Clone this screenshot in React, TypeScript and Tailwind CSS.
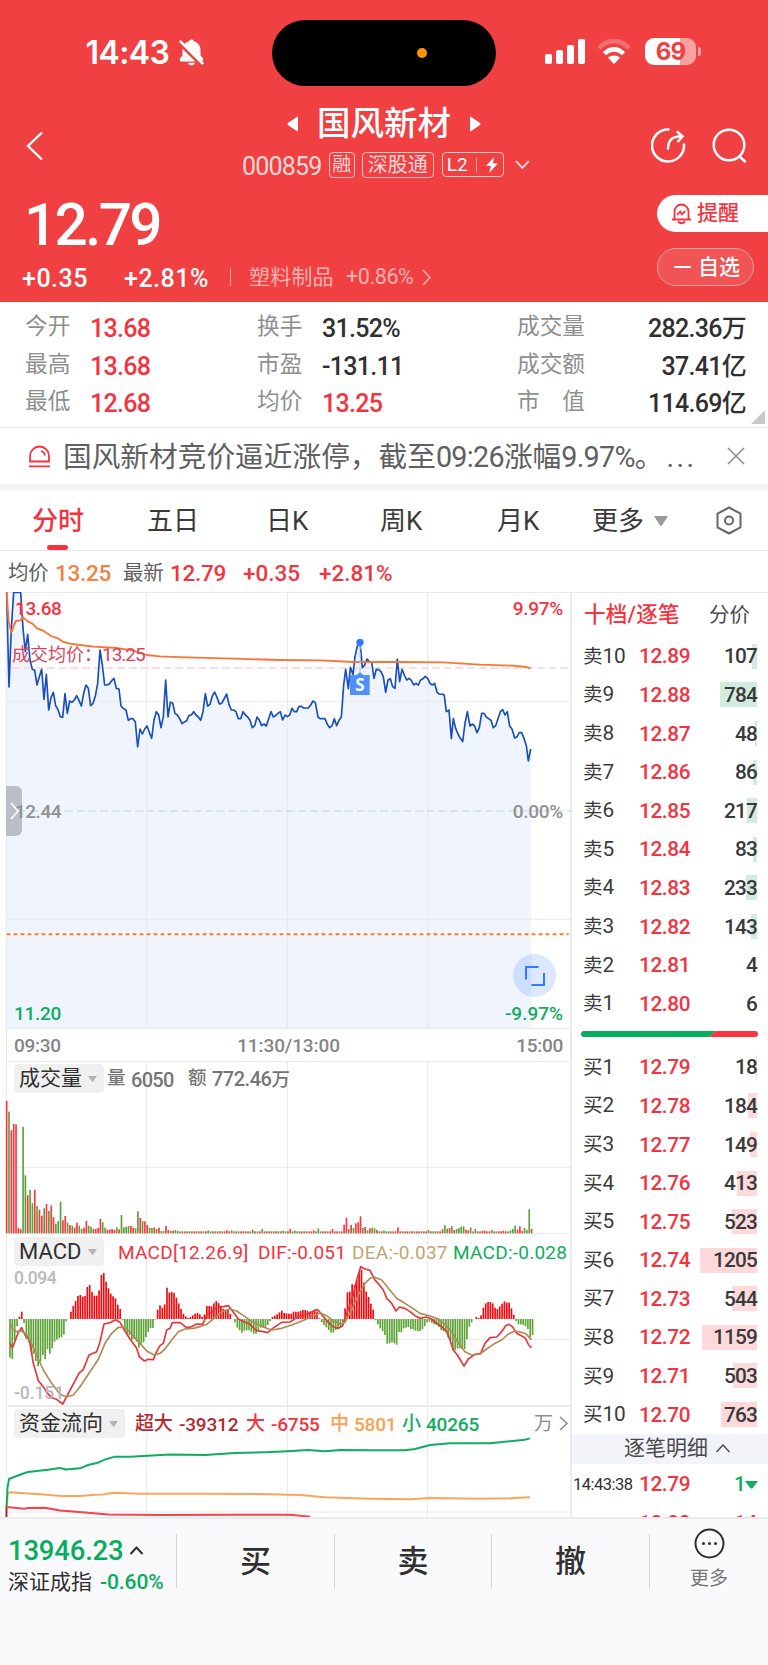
import { BiSolidBellOff } from "react-icons/bi";

const pricePoints =
    "20,22 27,306 34,130 41,22 62,22 69,130 76,200 83,148 90,225 97,253 104,255 111,300 118,275 125,253 132,343 139,268 146,375 153,338 160,322 167,362 174,374 181,395 188,397 195,326 202,385 209,348 216,352 223,345 230,332 237,346 244,363 251,325 258,300 265,310 272,362 279,355 286,333 293,295 300,195 307,240 314,300 321,300 328,297 335,287 342,280 349,310 357,312 363,363 370,370 378,375 385,406 392,401 399,401 406,411 413,486 420,432 427,447 434,432 441,423 448,442 455,460 462,405 469,380 476,390 483,428 490,395 497,285 504,396 511,352 518,354 525,385 532,390 539,401 546,416 553,411 560,407 567,391 574,390 581,380 588,390 595,396 602,406 609,380 616,326 623,363 630,358 637,333 644,321 651,337 658,357 665,355 672,342 680,327 687,358 694,375 701,375 708,380 715,401 722,401 729,380 736,390 743,396 750,406 757,428 764,422 771,396 778,406 785,422 792,417 799,423 806,401 813,380 820,396 827,391 834,385 841,380 848,405 855,390 862,395 869,390 876,370 883,380 890,380 897,364 904,364 911,369 925,369 932,360 939,348 946,353 954,396 960,401 975,401 982,418 989,428 996,422 1003,401 1010,422 1017,406 1024,396 1031,300 1037,253 1045,311 1051,247 1059,268 1065,215 1072,183 1080,172 1087,248 1094,240 1101,222 1108,230 1115,231 1122,280 1129,253 1136,254 1143,260 1150,275 1157,322 1164,285 1171,281 1178,305 1185,310 1192,222 1199,290 1206,253 1213,270 1220,285 1227,280 1234,286 1241,300 1248,295 1255,300 1262,285 1269,281 1276,274 1283,280 1290,295 1297,300 1304,295 1311,322 1318,327 1330,328 1333,332 1339,380 1347,375 1354,460 1360,401 1367,430 1374,447 1381,460 1388,470 1395,415 1402,380 1410,423 1417,417 1424,423 1431,443 1438,428 1445,385 1452,385 1459,396 1473,406 1480,428 1487,422 1494,401 1501,380 1508,374 1515,390 1522,380 1529,423 1536,432 1544,459 1551,455 1558,443 1565,443 1572,460 1579,482 1585,528 1592,492";

const avgPoints =
    "20,22 26,110 34,142 47,108 62,106 69,97 83,109 97,116 111,130 128,136 153,153 174,160 188,170 209,176 240,180 280,185 350,189 400,197 440,210 480,214 560,217 700,221 840,225 960,226 1060,231 1200,231 1330,232 1390,236 1440,239 1540,242 1580,246 1592,250";

const difPoints =
    "30,325 37,338 44,322 55,292 65,278 75,300 88,315 100,385 115,437 130,455 140,472 155,488 170,493 188,507 200,485 212,462 237,415 250,403 267,360 290,350 300,320 312,267 330,263 347,254 360,262 373,285 390,312 410,340 418,365 433,378 445,373 460,374 470,350 480,332 490,325 500,285 510,280 517,263 540,263 560,278 575,275 590,267 608,268 620,240 635,232 650,216 670,215 685,212 700,232 715,252 735,262 750,268 770,287 790,290 803,293 818,280 845,262 870,261 890,248 910,240 930,233 948,224 955,226 970,245 985,262 1000,276 1015,280 1028,272 1040,235 1060,180 1070,135 1082,95 1095,102 1110,106 1125,135 1140,152 1150,165 1160,190 1175,205 1188,228 1198,216 1215,220 1230,230 1245,242 1260,250 1280,246 1295,252 1310,265 1325,275 1340,290 1350,315 1360,345 1372,360 1392,393 1405,372 1425,358 1442,355 1455,325 1470,308 1490,306 1505,290 1517,272 1527,268 1537,275 1550,295 1575,308 1586,330 1595,338";

const deaPoints =
    "30,265 38,282 50,290 65,288 75,295 90,315 105,350 130,405 155,445 180,478 200,486 220,480 240,455 270,410 295,373 315,325 335,295 355,277 370,277 385,287 400,303 420,325 440,348 462,360 480,355 495,342 515,315 535,290 555,282 580,280 600,275 620,268 640,252 660,235 675,226 690,222 710,228 735,245 765,265 800,280 815,285 845,280 875,270 900,260 925,250 945,240 960,234 980,242 1000,258 1022,268 1035,262 1055,225 1075,180 1095,145 1110,130 1122,126 1145,135 1165,160 1190,190 1210,202 1235,218 1260,235 1290,243 1315,252 1335,268 1355,290 1375,325 1395,350 1415,360 1440,357 1460,342 1480,328 1505,315 1525,297 1545,288 1565,292 1580,298 1594,314";

// y of the end of every MACD bar, one per minute, the zero line is at 252
const macdBars = [
    368, 372, 315, 273, 246, 230, 264, 312, 320, 345, 357, 378, 394, 380, 360, 372, 342, 356, 340, 320, 314, 309, 306, 298, 259, 252,
    230, 213, 198, 183, 180, 185, 183, 156, 150, 171, 182, 182, 166, 120, 114, 140, 160, 176, 184, 190, 209, 222, 256, 283, 295, 300,
    314, 312, 320, 338, 326, 322, 306, 291, 279, 279, 254, 225, 211, 218, 208, 158, 173, 171, 174, 188, 205, 222, 237, 244, 249, 246,
    241, 236, 234, 238, 246, 238, 213, 213, 214, 205, 198, 204, 212, 222, 226, 225, 237, 252, 262, 278, 286, 293, 287, 286, 285, 290,
    296, 296, 287, 278, 278, 278, 270, 258, 246, 242, 238, 232, 227, 234, 235, 236, 236, 230, 230, 230, 228, 225, 225, 228, 230, 230,
    228, 230, 250, 262, 270, 277, 285, 293, 293, 285, 280, 275, 262, 220, 172, 170, 148, 150, 135, 112, 104, 143, 170, 186, 206, 224,
    256, 268, 280, 288, 300, 326, 325, 321, 325, 329, 291, 292, 280, 278, 276, 282, 283, 287, 288, 288, 283, 273, 262, 260, 264, 268,
    270, 276, 285, 288, 290, 308, 315, 346, 345, 340, 340, 342, 342, 312, 275, 262, 252, 246, 249, 241, 218, 205, 201, 201, 205, 218,
    222, 214, 206, 199, 203, 203, 220, 239, 258, 268, 268, 270, 274, 282, 306, 300,
];

// opening hour of the volume chart, minute by minute
const openVolume =
    "r138 g170 r226 r207 r208 r519 r523 g216 g361 r421 g405 g445 r405 g453 r464 r482 g460 r447 g468 r452 r486 g506 g498 g440 r496 r483 g503 r510 g512 r518 r503 g512 g522 r518 r498 g512 g515 r522 r522 r519 r492 g502 g518 r524 r524 r522 r525 g517 r523 g480 g517 g515 g513 r513 r518 g519 g469 r489 g498 r499 r510 g518 g519 r517 g522 r518 g528 g528 r513 r525 g527 r527 g525 g527".split(" ");

const laterVolume: Record<number, string> = {
    86: "g526", 94: "r526", 96: "g526", 105: "g524", 109: "g522", 118: "g527", 121: "r522", 123: "g527", 131: "r526", 133: "g520",
    139: "r522", 144: "r509", 145: "r488", 146: "g522", 147: "r510", 148: "g519", 149: "r505", 150: "r502", 151: "r484", 152: "g519",
    153: "r516", 154: "g526", 155: "r520", 156: "g518", 157: "g520", 158: "r525", 161: "g526", 167: "r517", 180: "g525", 186: "r523",
    187: "g511", 188: "g521", 189: "r519", 190: "g513", 191: "r525", 192: "g522", 193: "g519", 194: "g515", 195: "g514", 196: "r524",
    197: "r526", 198: "g517", 200: "g522", 203: "r527", 204: "r527", 207: "g525", 212: "r527", 215: "g526", 216: "g522", 217: "g512",
    218: "r524", 219: "r514", 220: "r528", 221: "g519", 222: "g525", 223: "g463", 224: "r522",
};

const volumeBars = Array.from({ length: 225 }, (_, i) => openVolume[i] ?? laterVolume[i] ?? (i * 7 % 5 < 3 ? "r529" : "g529"));

const sells = [
    { name: "卖10", price: "12.89", qty: 107, bar: 5 },
    { name: "卖9", price: "12.88", qty: 784, bar: 37 },
    { name: "卖8", price: "12.87", qty: 48, bar: 2 },
    { name: "卖7", price: "12.86", qty: 86, bar: 4 },
    { name: "卖6", price: "12.85", qty: 217, bar: 10 },
    { name: "卖5", price: "12.84", qty: 83, bar: 4 },
    { name: "卖4", price: "12.83", qty: 233, bar: 11 },
    { name: "卖3", price: "12.82", qty: 143, bar: 6 },
    { name: "卖2", price: "12.81", qty: 4, bar: 0 },
    { name: "卖1", price: "12.80", qty: 6, bar: 0 },
];

const buys = [
    { name: "买1", price: "12.79", qty: 18, bar: 1 },
    { name: "买2", price: "12.78", qty: 184, bar: 9 },
    { name: "买3", price: "12.77", qty: 149, bar: 7 },
    { name: "买4", price: "12.76", qty: 413, bar: 20 },
    { name: "买5", price: "12.75", qty: 523, bar: 25 },
    { name: "买6", price: "12.74", qty: 1205, bar: 57 },
    { name: "买7", price: "12.73", qty: 544, bar: 25 },
    { name: "买8", price: "12.72", qty: 1159, bar: 55 },
    { name: "买9", price: "12.71", qty: 503, bar: 24 },
    { name: "买10", price: "12.70", qty: 763, bar: 36 },
];

const stats = [
    [["今开", "13.68", true], ["换手", "31.52%", false], ["成交量", "282.36万", false]],
    [["最高", "13.68", true], ["市盈", "-131.11", false], ["成交额", "37.41亿", false]],
    [["最低", "12.68", true], ["均价", "13.25", true], ["市　值", "114.69亿", false]],
] as [string, string, boolean][][];

const StatusBar = () => (
    <div className="flex h-[87px] items-start text-white">
        <div className="ml-[85.5px] mt-[35px] w-[90px] font-['Inter'] text-[32px] leading-[35px] font-semibold tracking-[-0.6px]">14:43</div>
        <BiSolidBellOff className="mt-[36px] h-[33px] w-[31px]" />
        <div className="ml-[65.5px] mt-5 flex h-[66px] w-[224px] items-center rounded-full bg-black">
            <div className="ml-[145px] h-[10px] w-[10px] rounded-full bg-[#ff9500]" />
        </div>
        <div className="ml-[49px] mt-[39px] flex h-[25px] items-end gap-[4px]">
            <div className="h-[10px] w-[7px] rounded-[2px] bg-white" />
            <div className="h-[14px] w-[7px] rounded-[2px] bg-white" />
            <div className="h-[19px] w-[7px] rounded-[2px] bg-white" />
            <div className="h-[25px] w-[7px] rounded-[2px] bg-white" />
        </div>
        <svg className="ml-[12px] mt-[39px]" width="34" height="25" viewBox="0 0 34 25" fill="none">
            <path d="M2 9.5C10.300 -.6 23.700 -.6 32 9.500" stroke="#f56f70" strokeWidth="4.600" />
            <path d="M7.500 14.800C13 8.900 21 8.900 26.500 14.800" stroke="#fff" strokeWidth="4.600" />
            <path d="M17 25l-6-6.200c3.500-3 8.500-3 12 0z" fill="#fff" />
        </svg>
        <div className="ml-[14px] mt-[38px] flex h-[27px] items-center">
            <div className="flex h-[27px] w-[51px] items-center justify-center rounded-[9px] bg-[linear-gradient(90deg,#fff_69%,#f9a0a0_69%)] font-['Inter'] text-[24px] leading-none font-bold tracking-[-0.8px] text-[#ef4042]">69</div>
            <div className="ml-[2px] h-[9px] w-[3px] rounded-r-full bg-[#f9a0a0]" />
        </div>
    </div>
);

const Header = () => (
    <header className="flex h-[302px] flex-col bg-[#f04042] text-white">
        <StatusBar />
        <div className="flex h-[100px]">
            <svg className="ml-[25px] mt-[44px]" width="20" height="30" viewBox="0 0 20 30" fill="none" stroke="#fff" strokeWidth="2.400">
                <path d="M17 1.500L3 15l14 13.500" />
            </svg>
            <div className="ml-[197px] flex w-[288px] flex-col">
                <div className="mt-[18px] flex h-[38px] items-center pl-[45px]">
                    <svg width="12" height="16" viewBox="0 0 12 16" fill="#fff"><path d="M11 1.500v13q0 1.500-1.300.6L1 9Q0 8 1 7L9.700.9Q11 0 11 1.500z" /></svg>
                    <div className="ml-[18px] w-[152px] text-[33.500px] leading-none font-medium">国风新材</div>
                    <svg width="12" height="16" viewBox="0 0 12 16" fill="#fff"><path d="M1 1.500v13q0 1.500 1.300.6L11 9q1-1 0-2L2.300.9Q1 0 1 1.500z" /></svg>
                </div>
                <div className="mt-[8px] flex h-[27px] items-center text-[20px] leading-none text-[#ffd9d9]">
                    <span className="w-[88px] pt-[3px] text-[25px] tracking-[-0.8px]">000859</span>
                    <span className="flex h-[26px] w-[26px] items-center justify-center rounded-[4px] border border-[#ffc4c4] text-[19px]">融</span>
                    <span className="ml-[7px] flex h-[26px] w-[73px] items-center justify-center rounded-[4px] border border-[#ffc4c4] text-[20px]">深股通</span>
                    <span className="ml-[8px] flex h-[25px] w-[63px] items-center rounded-[4px] border border-[#ffc4c4] pl-[4px] text-[19px] text-white">
                        L2
                        <span className="ml-[8px] h-[14px] w-px bg-[#f9a0a0]" />
                        <svg className="ml-[8px]" width="14" height="16" viewBox="0 0 14 16" fill="#fff"><path d="M9 0L1 9h5l-2 7 9-9.500H8z" /></svg>
                    </span>
                    <svg className="ml-[11px]" width="15" height="10" viewBox="0 0 15 10" fill="none" stroke="#ffd9d9" strokeWidth="1.800"><path d="M1 1l6.500 7L14 1" /></svg>
                </div>
            </div>
            <svg className="ml-[121px] mt-[40px]" width="36" height="37" viewBox="0 0 36 37" fill="none" stroke="#fff" strokeWidth="2.500" strokeLinecap="round">
                <path d="M17.500 2.500a16 16 0 1 0 15.500 15" />
                <path d="M17 21.500c.3-8.500 4-12 13.500-12.300M26.500 5l5 4.300-4.300 5" />
            </svg>
            <svg className="ml-[25px] mt-[41px]" width="36" height="36" viewBox="0 0 36 36" fill="none" stroke="#fff" strokeWidth="2.500" strokeLinecap="round">
                <circle cx="17" cy="17" r="15.300" />
                <path d="M28 29l5 4.500" />
            </svg>
        </div>
        <div className="flex h-[115px] justify-between">
            <div className="flex flex-col">
                <div className="mt-[10px] ml-[24px] h-[56px] text-[58.500px] leading-[56px] font-medium tracking-[-2.700px]">12.79</div>
                <div className="mt-[10px] flex h-[28px] items-center text-[25px] leading-none font-medium tracking-[0.500px]">
                    <span className="ml-[22px] w-[102px] pt-[2px]">+0.35</span>
                    <span className="w-[106px] pt-[2px]">+2.81%</span>
                    <span className="h-[18px] w-px bg-[#f9a0a0]" />
                    <span className="ml-[18px] w-[97px] text-[21px] font-normal tracking-[0.200px] text-[#fcb0b0]">塑料制品</span>
                    <span className="w-[76px] text-[21.500px] font-normal tracking-[-0.400px] text-[#fcb0b0]">+0.86%</span>
                    <svg width="10" height="17" viewBox="0 0 10 17" fill="none" stroke="#fcb0b0" strokeWidth="1.600"><path d="M1 1l7 7.500L1 16" /></svg>
                </div>
            </div>
            <div className="mt-[8px] flex flex-col">
                <div className="flex h-[37px] w-[111px] items-center rounded-l-full bg-white text-[21px] leading-none font-medium text-[#f5333f]">
                    <svg className="ml-[14px] mr-[5px]" width="21" height="22" viewBox="0 0 21 22" fill="none" stroke="#f5333f" strokeWidth="1.800">
                        <path d="M1 16.500h19M3.500 16V8.500a7 7 0 0 1 14 0V16M7 18.500q3.500 3.500 7 0M6 12l3.200-3.500 1.800 2.800 3.300-3.300" />
                    </svg>
                    提醒
                </div>
                <div className="mt-[16px] flex h-[38px] w-[97px] items-center rounded-full border border-[#f9a0a0] bg-[#f15455] text-[21px] leading-none font-medium">
                    <span className="mr-[7px] ml-[16px] h-[2px] w-[17px] bg-white" />
                    自选
                </div>
            </div>
        </div>
    </header>
);

const Stats = () => (
    <section className="relative flex h-[126px] flex-col border-b border-[#e9e9ec] pt-[7px] text-[25px] leading-none font-medium tracking-[-0.700px] text-[#303030]">
        {stats.map((row, i) => (
            <div key={i} className="flex h-[37.500px] items-center">
                {row.map(([label, value, up], j) => (
                    <div key={label} className={["ml-[25px] flex w-[232px] items-center", "flex w-[260px] items-center", "flex w-[229px] items-center justify-between"][j]}>
                        <span className={`${j < 2 ? "w-[65px]" : ""} text-[22.700px] font-normal tracking-normal text-[#8f8f8f]`}>{label}</span>
                        <span className={`pt-[2px] ${up ? "text-[#f5333f]" : ""}`}>{value}</span>
                    </div>
                ))}
            </div>
        ))}
        <svg className="absolute right-[3px] bottom-[3px]" width="14" height="14" viewBox="0 0 14 14" fill="#c9c9c9"><path d="M14 0v14H0z" /></svg>
    </section>
);

const News = () => (
    <section className="flex h-[56px] items-center text-[#606060]">
        <svg className="ml-[28px]" width="23" height="23" viewBox="0 0 23 23" fill="none" stroke="#f5333f" strokeWidth="1.800">
            <path d="M2 16.500V11a9.500 9.500 0 0 1 19 0v5.500zM1 21.300h21M13 6q3.500 1 4 4.500" />
        </svg>
        <div className="ml-[12px] w-[655px] pt-[3px] text-[28.700px] leading-none whitespace-nowrap">
            国风新材竞价逼近涨停，截至<span className="tracking-[-0.700px]">09:26</span>涨幅<span className="tracking-[-0.700px]">9.97%</span>。<span className="ml-[3px] tracking-[2.500px]">...</span>
        </div>
        <svg className="ml-[9px]" width="18" height="18" viewBox="0 0 18 18" stroke="#8a8a8a" strokeWidth="1.500"><path d="M1 1l16 16M17 1L1 17" /></svg>
    </section>
);

const Tabs = () => (
    <nav className="flex h-[60px] items-center border-b border-[#e6e6e8] text-[26px] leading-none text-[#3a3a3a]">
        <div className="relative ml-[32px] flex h-full w-[115px] items-center pt-[1px] font-medium text-[#f5333f]">
            分时
            <div className="absolute bottom-0 left-[15px] h-[5px] w-[21px] rounded-full bg-[#f5333f]" />
        </div>
        <div className="w-[119px] pt-[1px]">五日</div>
        <div className="w-[114px] pt-[1px]">日K</div>
        <div className="w-[117px] pt-[1px]">周K</div>
        <div className="w-[95px] pt-[1px]">月K</div>
        <div className="w-[62px] pt-[1px]">更多</div>
        <svg width="14" height="10" viewBox="0 0 14 10" fill="#999"><path d="M1 0h12q1 0 .5 1L7.800 9.500q-.8 1-1.600 0L.5 1Q0 0 1 0z" /></svg>
        <svg className="ml-[47px]" width="28" height="29" viewBox="0 0 28 29" fill="none" stroke="#666" strokeWidth="2" strokeLinejoin="round">
            <path d="M14 1.500l11.500 6.200v13.600L14 27.500 2.500 21.300V7.700z" />
            <circle cx="14" cy="14.500" r="4" />
        </svg>
    </nav>
);

const Summary = () => (
    <div className="flex h-[41px] items-center pt-[3px] text-[22.500px] leading-none font-medium tracking-[-0.300px] text-[#f5333f]">
        <span className="ml-[8px] w-[47px] text-[20.500px] font-normal text-[#606060]">均价</span>
        <span className="w-[68px] text-[#ee8144]">13.25</span>
        <span className="w-[47px] text-[20.500px] font-normal text-[#606060]">最新</span>
        <span className="w-[73px]">12.79</span>
        <span className="w-[76px] tracking-normal">+0.35</span>
        <span className="tracking-normal">+2.81%</span>
    </div>
);

// shared frame of the charts: left and right edge and the three time lines
const Grid = ({ top, bottom, mid }: { top: number; bottom: number; mid: number[] }) => (
    <g stroke="#e8e8e8" strokeWidth="3">
        {[19, 440, 862, 1283].map((x) => <path key={x} d={`M${x} ${top}V${bottom}`} />)}
        <path d={`M1713 ${top}V${bottom}`} strokeWidth="5" />
        {mid.map((y) => <path key={y} d={`M19 ${y}H1713`} />)}
    </g>
);

const Chip = ({ children }: any) => (
    <div className="ml-[14px] flex h-[29px] shrink-0 items-center rounded-[4px] bg-[#f0f0f0] pr-[7px] pl-[5px] text-[21px] leading-none text-[#303030]">
        {children}
        <svg className="ml-[5px]" width="9" height="6" viewBox="0 0 9 6" fill="#b5b5b5"><path d="M0 0h9L5.200 5.500q-.7.700-1.400 0z" /></svg>
    </div>
);

const PriceChart = () => (
    <div className="relative h-[437px] text-[19px] leading-none font-medium">
        <svg className="absolute inset-0" width="572" height="437" viewBox="0 21 1716 1311" fill="none">
            <polygon points={`20,1330 ${pricePoints} 1594,492 1594,1330`} fill="#eff4fe" />
            <Grid top={21} bottom={1332} mid={[22, 349, 1003, 1330]} />
            <path d="M36 249H1713" stroke="#f9d5d9" strokeWidth="4" strokeDasharray="24 11" />
            <path d="M20 678H1713" stroke="#d0dfe9" strokeWidth="4" strokeDasharray="24 11" />
            <path d="M20 1048H1706" stroke="#ff7a1a" strokeWidth="6" strokeDasharray="11 10" />
            <polyline points={pricePoints} stroke="#184fbb" strokeWidth="5" strokeLinejoin="round" />
            <polyline points={avgPoints} stroke="#fb7435" strokeWidth="5.500" strokeLinejoin="round" />
            <path d="M1080 180v86" stroke="#a9c6fb" strokeWidth="4" strokeDasharray="14 8" />
            <circle cx="1080" cy="172" r="11" fill="#2e7cff" />
            <path d="M1050 270h20l10-9 10 9h19v60h-59z" fill="#4f90fd" />
        </svg>
        <div className="absolute top-[84px] left-[350px] w-[20px] text-center font-['Noto_Sans'] text-[17px] leading-[18px] font-bold text-white">S</div>
        <div className="absolute top-[7px] left-[15px] tracking-[-0.400px] text-[#f5333f]">13.68</div>
        <div className="absolute top-[7px] right-[9px] tracking-[-0.300px] text-[#f5333f]">9.97%</div>
        <div className="absolute top-[52px] left-[12px] flex h-[21px] items-center text-[18px] font-normal text-[#d9455a]">
            <span className="w-[90px] whitespace-nowrap">成交均价：</span>
            <span className="text-[19px] tracking-[-1px]">13.25</span>
        </div>
        <div className="absolute top-[194px] left-[6px] flex h-[50px] w-[16px] items-center rounded-r-[6px] bg-[#b9bec8]">
            <svg className="ml-[4px]" width="10" height="18" viewBox="0 0 10 18" fill="none" stroke="#fff" strokeWidth="1.800"><path d="M1 1l7 8-7 8" /></svg>
        </div>
        <div className="absolute top-[210px] left-[15px] tracking-[-0.500px] text-[#929292]">12.44</div>
        <div className="absolute top-[210px] right-[9px] tracking-[-0.300px] text-[#929292]">0.00%</div>
        <div className="absolute top-[412px] left-[14px] tracking-[-0.300px] text-[#10ad60]">11.20</div>
        <div className="absolute top-[412px] right-[9px] text-[#10ad60]">-9.97%</div>
        <div className="absolute top-[362px] left-[513px] flex h-[43px] w-[43px] items-center justify-center rounded-full bg-[#4a8cff]/20">
            <svg width="20" height="20" viewBox="0 0 20 20" fill="none" stroke="#2e7cff" strokeWidth="2"><path d="M1 13.500V1h12.500M6.500 19H19V7" /></svg>
        </div>
    </div>
);

const TimeAxis = () => (
    <div className="ml-[6px] flex h-[32px] w-[566px] items-center justify-between border-r-2 border-l border-[#e8e8e8] pt-[1px] pr-[7px] pl-[7px] text-[19px] leading-none font-medium tracking-[-0.100px] text-[#858585]">
        <span className="tracking-[-0.300px]">09:30</span>
        <span>11:30/13:00</span>
        <span className="tracking-[-0.300px]">15:00</span>
    </div>
);

const VolumeChart = () => (
    <div className="relative h-[173px] pt-[3px]">
        <svg className="absolute inset-0" width="572" height="173" viewBox="0 18 1716 519">
            <Grid top={18} bottom={537} mid={[19, 337, 536]} />
            {volumeBars.map((bar, i) => {
                const y = Number(bar.slice(1));
                return <rect key={i} x={17.500 + i * 7.030} y={y} width="5" height={535 - y} fill={bar[0] === "r" ? "#fb3640" : "#5da03c"} />;
            })}
        </svg>
        <div className="relative flex items-center text-[20px] leading-none font-medium text-[#757575]">
            <Chip><span className="w-[64px] font-normal">成交量</span></Chip>
            <span className="ml-[3px] w-[24px] text-[18.500px]">量</span>
            <span className="w-[57px] pt-[2px] tracking-[-0.700px]">6050</span>
            <span className="w-[24px] text-[18.500px]">额</span>
            <span className="pt-[2px] tracking-[-0.500px]">772.46<span className="text-[18.500px]">万</span></span>
        </div>
    </div>
);

const MacdChart = () => (
    <div className="relative h-[172px] pt-[3px]">
        <svg className="absolute inset-0" width="572" height="172" viewBox="0 -3 1716 516" fill="none">
            <Grid top={-3} bottom={513} mid={[313, 512]} />
            {macdBars.map((y, i) => (
                <rect key={i} x={27.500 + i * 7.030} y={Math.min(y, 252)} width="5" height={Math.abs(252 - y)} fill={y < 252 ? "#f6070c" : "#5da336"} />
            ))}
            <polyline points={difPoints} stroke="#e0383d" strokeWidth="5" strokeLinejoin="round" />
            <polyline points={deaPoints} stroke="#ad8d55" strokeWidth="5" strokeLinejoin="round" />
        </svg>
        <div className="relative flex items-center text-[19px] leading-none tracking-[0.250px] text-[#f5333f]">
            <Chip><span className="w-[64px] text-[22px] tracking-normal">MACD</span></Chip>
            <span className="ml-[14px] w-[140px] pt-[1px]">MACD[12.26.9]</span>
            <span className="w-[94px] pt-[1px]">DIF:-0.051</span>
            <span className="w-[101px] pt-[1px] text-[#bfa674]">DEA:-0.037</span>
            <span className="pt-[1px] text-[#10ad60]">MACD:-0.028</span>
        </div>
        <div className="absolute top-[36px] left-[14px] text-[17.500px] leading-none font-medium tracking-[-0.500px] text-[#b9b9b9]">0.094</div>
        <div className="absolute top-[151px] left-[14px] text-[17.500px] leading-none font-medium tracking-[-0.100px] text-[#b9b9b9]">-0.151</div>
    </div>
);

const FundChart = () => (
    <div className="relative h-[111px] pt-[3px]">
        <svg className="absolute inset-0" width="572" height="111" viewBox="0 0 1716 333" fill="none">
            <Grid top={0} bottom={333} mid={[1, 318]} />
            <g transform="scale(3)" strokeWidth="1.900" strokeLinejoin="round">
                <path d="M6.500 101v10" stroke="#b01c1c" />
                <polyline stroke="#f5424c" points="6.500,101 12,101.500 24,102.700 28,102 45,101.700 60,104.500 85,106.500 108,108.500 160,109 230,108.700 290,108.700 310,110.700" />
                <polyline stroke="#fba55c" points="6.500,101 8,87 10,86.300 40,88.300 62,90 80,90 95,88.700 103,88.500 113,86.700 140,87.700 200,87.700 260,88 300,89 325,91.300 370,92.700 410,93.200 430,92 480,92.700 510,92.300 530,91.300" />
                <polyline stroke="#10ad60" points="6.500,101 7.500,82 9,73 14,71 22,68 28,66 48,63.700 60,62 66,63.500 80,62.300 88,59 98,56.700 105,53.500 115,50.700 130,50.700 170,48.500 205,49 235,47 265,46.300 287,45.300 308,44 325,45.300 340,44 370,44.300 405,44.300 415,43 430,39 450,37.300 490,37.300 510,35.300 525,33.700 530,32.300" />
            </g>
        </svg>
        <div className="relative flex items-center text-[19px] leading-none font-medium tracking-[-0.200px]">
            <Chip><span className="w-[85px] font-normal tracking-normal">资金流向</span></Chip>
            <span className="ml-[10px] w-[44px] text-[#b5292b]">超大</span>
            <span className="w-[67px] pt-[1px] text-[#b5292b]">-39312</span>
            <span className="w-[25px] text-[#f5333f]">大</span>
            <span className="w-[59px] pt-[1px] text-[#f5333f]">-6755</span>
            <span className="w-[24px] text-[#fba04f]">中</span>
            <span className="w-[48px] pt-[1px] text-[#fba04f]">5801</span>
            <span className="w-[24px] text-[#10ad60]">小</span>
            <span className="w-[108px] pt-[1px] text-[#10ad60]">40265</span>
            <span className="w-[25px] font-normal text-[#8a8a8a]">万</span>
            <svg width="10" height="15" viewBox="0 0 10 15" fill="none" stroke="#8a8a8a" strokeWidth="1.500"><path d="M1 1l7 6.500L1 14" /></svg>
        </div>
    </div>
);

const BookRow = ({ row, sell }: any) => (
    <div className="flex h-[38.600px] items-center text-[20.800px] leading-none text-[#3a3a3a]">
        <span className="w-[56px]"><span className="text-[19.500px]">{row.name[0]}</span><span className="tracking-[-0.200px]">{row.name.slice(1)}</span></span>
        <span className="pt-[1px] font-medium tracking-[-0.400px] text-[#f5333f]">{row.price}</span>
        <span className="relative ml-auto flex h-[25px] items-center font-medium tracking-[-0.800px]">
            <span className={`absolute top-0 right-0 h-full ${sell ? "bg-[#d1ecdf]" : "bg-[#fdd9dc]"}`} style={{ width: row.bar }} />
            <span className="relative pt-[1px]">{row.qty}</span>
        </span>
    </div>
);

const OrderBook = () => (
    <aside className="h-full w-[196px] overflow-hidden border-t border-[#e8e8e8]">
        <div className="flex h-[44px] items-center pl-[12px] text-[20.500px] leading-none text-[#4a4a4a]">
            <span className="w-[125px] text-[21.500px] font-medium tracking-[0.300px] text-[#f5333f]">十档/逐笔</span>
            <span>分价</span>
        </div>
        <div className="pr-[11px] pl-[11px]">
            {sells.map((row) => <BookRow key={row.name} row={row} sell />)}
        </div>
        <svg className="mt-[8px] ml-[9px]" width="177" height="6" viewBox="0 0 177 6">
            <path d="M3 0h132l-7 6H3a3 3 0 0 1 0-6z" fill="#06ad5c" />
            <path d="M135 0h39a3 3 0 0 1 0 6h-46z" fill="#fb3640" />
        </svg>
        <div className="mt-[11px] pr-[11px] pl-[11px]">
            {buys.map((row) => <BookRow key={row.name} row={row} />)}
        </div>
        <div className="flex h-[30px] items-center bg-[#f3f4f9] pl-[52px] text-[21px] leading-none text-[#4a4a4a]">
            逐笔明细
            <svg className="ml-[8px]" width="14" height="9" viewBox="0 0 14 9" fill="none" stroke="#4a4a4a" strokeWidth="1.500"><path d="M.5 8L7 1l6.500 7" /></svg>
        </div>
        <div className="flex h-[42px] items-center leading-none font-medium">
            <span className="w-[67px] pl-px text-[16.500px] font-normal tracking-[-0.500px] text-[#303030]">14:43:38</span>
            <span className="w-[95px] text-[20.800px] tracking-[-0.400px] text-[#f5333f]">12.79</span>
            <span className="w-[11px] text-[20.800px] text-[#10ad60]">1</span>
            <svg width="13" height="8" viewBox="0 0 13 8" fill="#10ad60"><path d="M0 0h13L7.500 7.200q-1 .8-2 0z" /></svg>
        </div>
        <div className="flex h-[36px] items-center pl-[67px] text-[20.800px] leading-none font-medium tracking-[-0.400px] text-[#f5333f]">
            <span className="w-[95px]">12.80</span>
            <span>14</span>
        </div>
    </aside>
);

const Footer = () => (
    <footer className="flex h-[148px] border-t-2 border-[#ebebee] bg-[#fafafc] pt-[15px]">
        <div className="flex h-[54px] w-[177px] flex-col border-r border-[#d5d5d8] pl-[8px]">
            <div className="mt-[4px] flex h-[26px] items-center text-[27.500px] leading-none font-medium text-[#06ad5c]">
                <span className="w-[121px] tracking-[-0.200px]">13946.23</span>
                <svg className="-mt-[2px]" width="15" height="9" viewBox="0 0 15 9" fill="none" stroke="#303030" strokeWidth="2"><path d="M1.500 8l6-6.500 6 6.500" /></svg>
            </div>
            <div className="mt-[8px] flex h-[24px] items-center text-[21px] leading-none text-[#303030]">
                <span className="w-[92px]">深证成指</span>
                <span className="font-medium tracking-[-0.100px] text-[#06ad5c]">-0.60%</span>
            </div>
        </div>
        <button className="flex h-[54px] w-[158px] items-center justify-center border-r border-[#d5d5d8] text-[31px] leading-none font-medium text-[#303030]">买</button>
        <button className="flex h-[54px] w-[157px] items-center justify-center border-r border-[#d5d5d8] text-[31px] leading-none font-medium text-[#303030]">卖</button>
        <button className="flex h-[54px] w-[158px] items-center justify-center border-r border-[#d5d5d8] text-[31px] leading-none font-medium text-[#303030]">撤</button>
        <div className="-mt-[6px] flex flex-1 flex-col items-center text-[19px] leading-none text-[#757575]">
            <svg width="31" height="31" viewBox="0 0 31 31" fill="none" stroke="#303030" strokeWidth="2">
                <circle cx="15.500" cy="15.500" r="14" />
                <g fill="#303030" stroke="none"><circle cx="9.500" cy="15.500" r="1.500" /><circle cx="15.500" cy="15.500" r="1.500" /><circle cx="21.500" cy="15.500" r="1.500" /></g>
            </svg>
            <span className="mt-[10px]">更多</span>
        </div>
    </footer>
);

export default function App() {
    return (
        <div className="flex h-[1665px] w-[768px] flex-col overflow-hidden bg-white font-['Roboto','Noto_Sans_CJK_SC',sans-serif]">
            <Header />
            <Stats />
            <News />
            <div className="h-[7px] bg-[#f3f4f9]" />
            <Tabs />
            <Summary />
            <main className="flex h-[925px] overflow-hidden">
                <div className="flex w-[572px] flex-col">
                    <PriceChart />
                    <TimeAxis />
                    <VolumeChart />
                    <MacdChart />
                    <FundChart />
                </div>
                <OrderBook />
            </main>
            <Footer />
        </div>
    );
}
